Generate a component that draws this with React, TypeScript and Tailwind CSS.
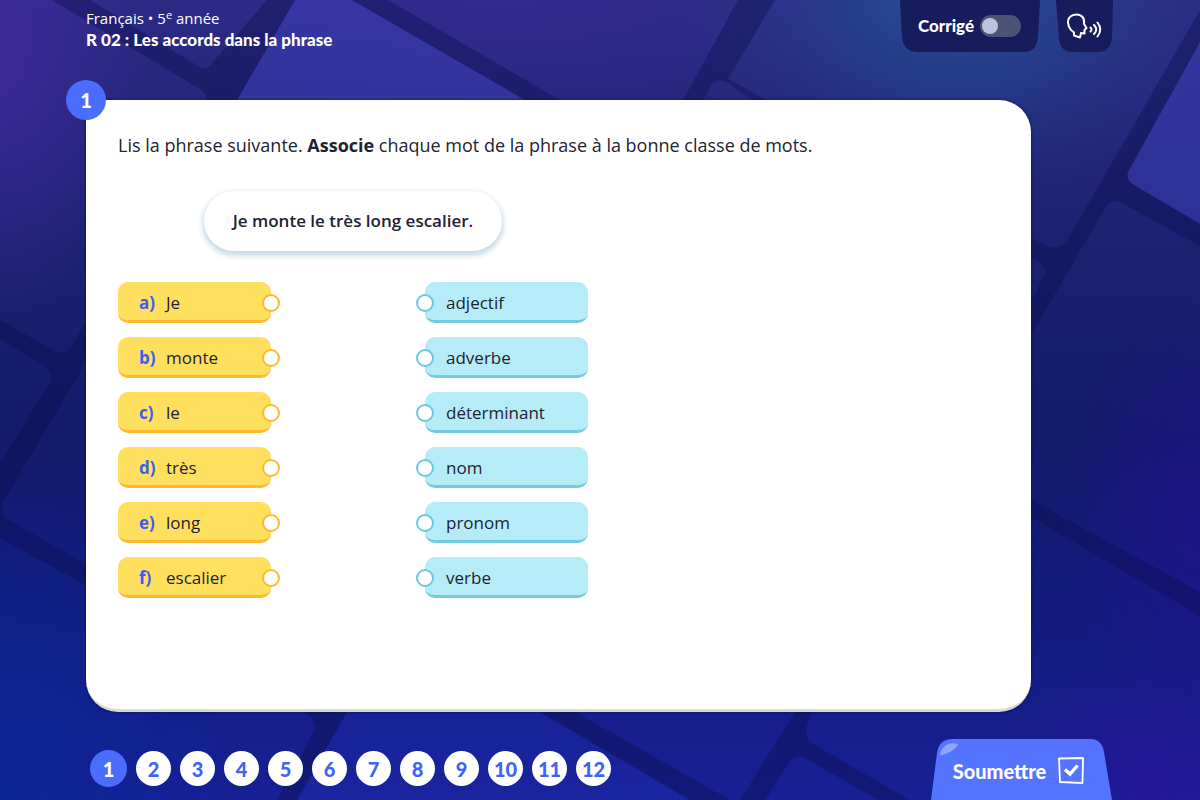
import React, { useState } from 'react';

interface Word {
  letter: string;
  text: string;
}

const words: Word[] = [
  { letter: 'a)', text: 'Je' },
  { letter: 'b)', text: 'monte' },
  { letter: 'c)', text: 'le' },
  { letter: 'd)', text: 'très' },
  { letter: 'e)', text: 'long' },
  { letter: 'f)', text: 'escalier' },
];

const wordClasses = ['adjectif', 'adverbe', 'déterminant', 'nom', 'pronom', 'verbe'];

const questions = [1, 2, 3, 4, 5, 6, 7, 8, 9, 10, 11, 12];

const Backdrop = () => (
  <svg
    className="absolute inset-0 -z-10 h-full w-full"
    viewBox="0 0 1200 800"
    preserveAspectRatio="xMidYMid slice"
    aria-hidden="true"
  >
    <defs>
      <linearGradient id="base" x1="0" y1="0" x2="0" y2="1">
        <stop offset="0" stopColor="#2d2a86" />
        <stop offset="0.3" stopColor="#1b2272" />
        <stop offset="0.55" stopColor="#121b6c" />
        <stop offset="0.8" stopColor="#131d80" />
        <stop offset="1" stopColor="#172094" />
      </linearGradient>
      <radialGradient id="violet">
        <stop offset="0" stopColor="#452aa0" stopOpacity="0.7" />
        <stop offset="1" stopColor="#452aa0" stopOpacity="0" />
      </radialGradient>
      <radialGradient id="sky">
        <stop offset="0" stopColor="#26569e" stopOpacity="0.9" />
        <stop offset="1" stopColor="#1f3a80" stopOpacity="0" />
      </radialGradient>
      <radialGradient id="purple">
        <stop offset="0" stopColor="#2b0f9a" stopOpacity="0.9" />
        <stop offset="1" stopColor="#2b0f9a" stopOpacity="0" />
      </radialGradient>
      <radialGradient id="blue">
        <stop offset="0" stopColor="#0c2596" stopOpacity="0.9" />
        <stop offset="1" stopColor="#0c2596" stopOpacity="0" />
      </radialGradient>
    </defs>
    <rect width="1200" height="800" fill="url(#base)" />
    <ellipse cx="0" cy="60" rx="140" ry="260" fill="url(#violet)" />
    <ellipse cx="500" cy="0" rx="330" ry="140" fill="url(#violet)" opacity="0.4" />
    <ellipse cx="960" cy="0" rx="300" ry="200" fill="url(#sky)" />
    <ellipse cx="1200" cy="520" rx="130" ry="220" fill="url(#purple)" opacity="0.5" />
    <ellipse cx="1150" cy="780" rx="150" ry="120" fill="url(#purple)" opacity="0.7" />
    <ellipse cx="0" cy="800" rx="260" ry="320" fill="url(#blue)" />
    <g fill="#4048c8" fillOpacity="0.4">
      <path d="M295 0H352L525 100H237Z" />
      <path d="M1200 42L1129 170Q1124 179 1134 185L1200 224Z" />
    </g>
    <path d="M347 712H540L690 800H297Z" fill="#2030c0" fillOpacity="0.25" />
    <g fill="#0d1150" fillOpacity="0.42">
      <path d="M52 0H90L198 66Q208 72 213 62L267 0H295L237 100H208Q205 92 198 88Z" />
      <path d="M352 0H388L560 100H525Z" />
      <path d="M738 0H775L728 79Q738 83 768 102H755L733 87Q720 75 712 84L703 100H683Z" />
      <path d="M1200 10V42L1129 170Q1124 179 1134 185L1200 224V246L1122 203Q1113 198 1106 207L1031 335V302L1043 278Q1048 268 1040 263L1031 257V238L1046 246Q1059 251 1068 239Z" />
      <path d="M1031 500L1200 592V616L1031 517Z" />
      <path d="M0 320L54 351Q64 356 71 347L86 322V362L4 500Q-1 512 8 520L86 564V585L0 538V464L49 384Q55 374 46 367L0 339Z" />
      <path d="M305 712H347L297 800H277L314 731Q318 722 305 712Z" />
      <path d="M540 712H575L730 800H690Z" />
      <path d="M795 712H812L806 728Q805 738 813 744L910 800H878L807 759Q797 752 790 761L765 800H740Z" />
    </g>
  </svg>
);

const Tab = ({ shape, viewBox, className, children }: {
  shape: string;
  viewBox: string;
  className: string;
  children: React.ReactNode;
}) => (
  <div className={`relative flex h-[52px] items-center ${className}`}>
    <svg className="absolute inset-0 -z-10 h-full w-full" viewBox={viewBox} preserveAspectRatio="none" aria-hidden="true">
      <path d={shape} fill="#161c5c" />
    </svg>
    {children}
  </div>
);

const Header = () => {
  const [showAnswers, setShowAnswers] = useState(false);

  return (
    <header className="flex h-[100px] items-start justify-between pl-[86px] pr-[87px] text-white">
      <div className="pt-2">
        <p className="text-[15px] leading-5">
          Français • 5<sup className="text-[11px]">e</sup> année
        </p>
        <h1 className="font-[Lato,sans-serif] text-[17px] font-black leading-6">
          R 02 : Les accords dans la phrase
        </h1>
      </div>
      <div className="flex gap-4">
        <Tab
          className="w-[140px] gap-1.5 pl-[18px]"
          viewBox="0 0 140 52"
          shape="M0 0H140L138 36Q137 52 124 52H18Q4 52 2 38Z"
        >
          <label htmlFor="corrige" className="font-[Lato,sans-serif] text-[17px] font-black">
            Corrigé
          </label>
          <input
            id="corrige"
            type="checkbox"
            role="switch"
            checked={showAnswers}
            onChange={() => setShowAnswers(!showAnswers)}
            className="flex h-[22px] w-[41px] shrink-0 cursor-pointer appearance-none items-center rounded-full bg-[#4c5476] px-[2px] before:size-4 before:rounded-full before:bg-[#bcc3dc] checked:justify-end"
          />
        </Tab>
        <Tab
          className="w-[57px] justify-center"
          viewBox="0 0 57 52"
          shape="M0 0H57L56 37Q55 52 42 52H16Q4 52 3 38Z"
        >
          <button type="button" aria-label="Écouter" className="cursor-pointer">
            <svg width="37" height="27" viewBox="0 0 37 27" fill="none" stroke="white" strokeWidth="2" strokeLinejoin="round" strokeLinecap="round">
              <path d="M8 19.500V22.500L14 24.500L15 20L18.500 20.500L18.500 17L20.500 15L18 11C19 5 15.500 1.500 10.500 1.500C5 1.500 1.800 5 2 9.500C2.200 13 3.200 15 5 17Q6.500 18 8 19.500Z" />
              <path d="M24.500 14.500Q26.500 16.500 24.500 18.500M28 12Q32.500 16.500 28 21M31.500 9.500Q37 16.500 31.500 23.500" />
            </svg>
          </button>
        </Tab>
      </div>
    </header>
  );
};

const Exercise = () => (
  <main className="relative ml-[86px] mr-[169px] flex-1 rounded-[32px] rounded-tl-none border-b-3 border-[#d9dad6] bg-white px-8 pb-24 pt-8 text-[#1f2233] shadow-[0_0_3px_#0a0f50]">
    <span className="absolute -left-5 -top-5 flex size-10 items-center justify-center rounded-full bg-[#4a6dff] font-[Lato,sans-serif] text-xl font-black text-white">
      1
    </span>
    <p className="text-lg leading-[26px]">
      Lis la phrase suivante. <strong className="font-bold">Associe</strong> chaque mot de la phrase à la bonne classe de mots.
    </p>
    <div className="w-[470px]">
      <p className="mx-auto mt-[33px] flex h-[60px] w-[298px] items-center justify-center rounded-full text-[17px] font-semibold shadow-[0_3px_6px_1px_#bdd5e4]">
        Je monte le très long escalier.
      </p>
      <div className="mt-[31px] flex justify-between">
        <ul className="flex flex-col gap-[14px]">
          {words.map((word) => (
            <li key={word.letter}>
              <button
                type="button"
                className="relative flex h-[41px] w-[153px] cursor-pointer items-center rounded-[10px] border-b-3 border-[#ffb930] bg-[#ffe05e] pl-[21px] pt-[3px] text-[17px]"
              >
                <span className="w-[27px] text-left font-bold text-[#3d5cf5]">{word.letter}</span>
                {word.text}
                <span className="absolute -right-[9px] top-3 size-[18px] rounded-full border-2 border-[#ffb930] bg-white" />
              </button>
            </li>
          ))}
        </ul>
        <ul className="flex flex-col gap-[14px]">
          {wordClasses.map((name) => (
            <li key={name}>
              <button
                type="button"
                className="relative flex h-[41px] w-[163px] cursor-pointer items-center rounded-[10px] border-b-3 border-[#74cbdf] bg-[#b6ecf8] pl-[21px] pt-[3px] text-[17px]"
              >
                {name}
                <span className="absolute -left-[9px] top-3 size-[18px] rounded-full border-2 border-[#6cc8dc] bg-white" />
              </button>
            </li>
          ))}
        </ul>
      </div>
    </div>
  </main>
);

const Footer = () => {
  const [current, setCurrent] = useState(1);

  return (
    <footer className="flex h-[88px] items-end justify-between pl-[90px] pr-[88px]">
      <nav aria-label="Questions" className="flex h-[62px] items-start gap-[9px]">
        {questions.map((n) => (
          <button
            key={n}
            type="button"
            onClick={() => setCurrent(n)}
            className={`flex cursor-pointer items-center justify-center rounded-full font-[Lato,sans-serif] text-xl font-black ${
              n === current ? 'mt-3 size-[37px] bg-[#4a6dff] text-white' : 'mt-[13px] size-[35px] bg-white text-[#3f62fb]'
            }`}
          >
            {n}
          </button>
        ))}
      </nav>
      <button
        type="button"
        className="relative z-0 flex h-[61px] w-[181px] cursor-pointer items-center justify-center gap-3 pr-1.5 pt-0.5 font-[Lato,sans-serif] text-xl font-black text-white"
      >
        <svg className="absolute inset-0 -z-10 h-full w-full" viewBox="0 0 181 61" preserveAspectRatio="none" aria-hidden="true">
          <path d="M0 61L6 14Q8 0 21 0H159Q171 0 173 13L181 61Z" fill="#5473ff" />
          <path d="M9 16C10 7 19 2 27 5C26 10 15 16 9 16Z" fill="#8ea5ff" />
        </svg>
        Soumettre
        <svg width="26" height="27" viewBox="0 0 26 27" fill="none" stroke="white" aria-hidden="true">
          <path d="M1 1.500L25 1L24.500 26L2 25Z" strokeWidth="1.800" strokeLinejoin="round" />
          <path d="M7 12.500L12 17L19.500 8.500" strokeWidth="3.400" />
        </svg>
      </button>
    </footer>
  );
};

const App = () => (
  <div className="relative z-0 flex min-h-screen flex-col overflow-hidden bg-[#131d7a] font-['Open_Sans',sans-serif]">
    <Backdrop />
    <Header />
    <Exercise />
    <Footer />
  </div>
);

export default App;
